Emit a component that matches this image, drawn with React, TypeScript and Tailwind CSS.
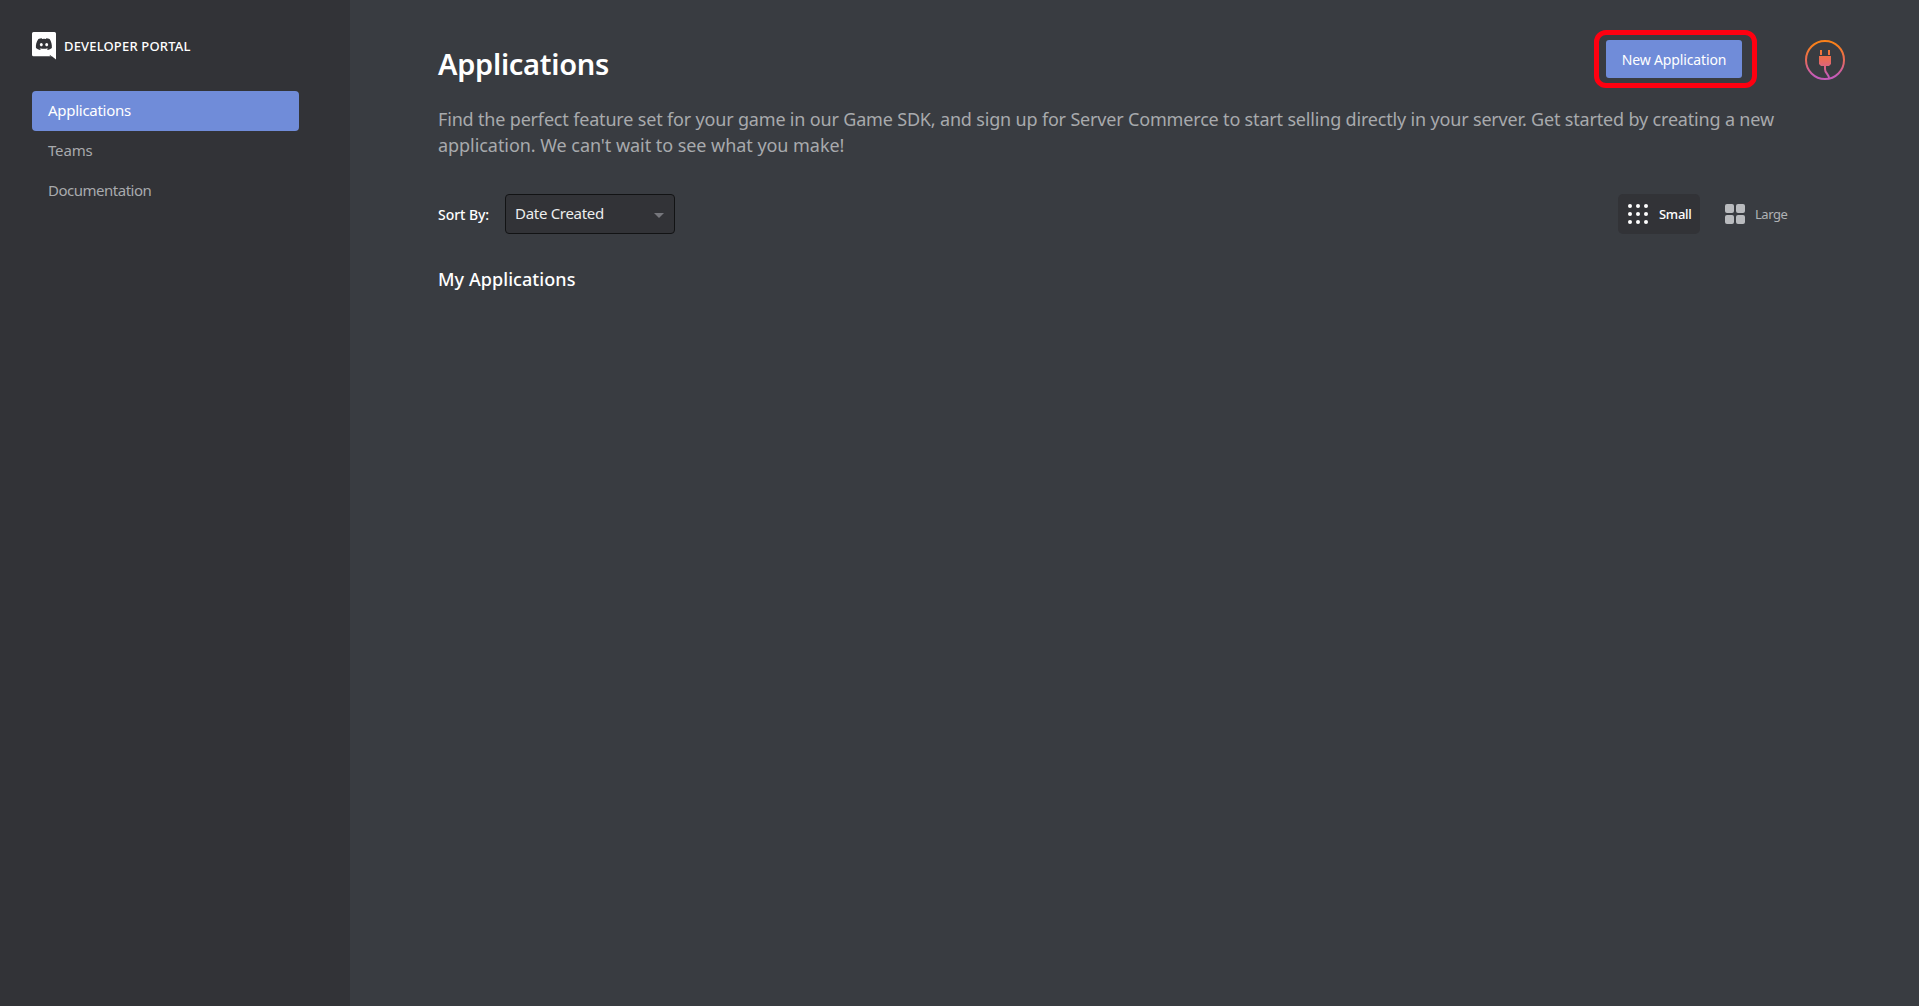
import React from "react";

const navItems = [
  { label: "Applications", style: "bg-[#708cd9] text-white tracking-[-0.28px]" },
  { label: "Teams", style: "text-[#a8aaad] tracking-[-0.18px]" },
  { label: "Documentation", style: "text-[#a8aaad] tracking-[-0.49px]" },
];

function DiscordMark() {
  return (
    <svg className="h-[27.5px] w-6 shrink-0" viewBox="35 20 175 200" preserveAspectRatio="none" fill="#fff">
      <path d="M46 20h153q11 0 11 11v189l-30-24H46q-11 0-11-11V31q0-11 11-11z" />
      <path fill="#323337" d="M164 186l14 11h-12z" />
      <g transform="translate(63.5 65) scale(4.92 4.78)">
        <path
          fill="#323337"
          d="M20.317 1.370A19.800 19.800 0 0 0 15.432 0c-.230.400-.500.900-.640 1.250a18.300 18.300 0 0 0-5.490 0A12.600 12.600 0 0 0 8.680 0 19.700 19.700 0 0 0 3.680 1.370C.530 6.050-.320 10.600.100 15.060a19.900 19.900 0 0 0 6 3.030c.460-.630.870-1.300 1.220-1.990a13 13 0 0 1-1.870-.900l.370-.290c3.930 1.790 8.180 1.790 12.060 0l.370.290c-.600.350-1.220.650-1.870.900.360.700.770 1.360 1.230 1.990a19.800 19.800 0 0 0 6-3.030c.500-5.180-.840-9.670-3.290-13.690zM8.020 12.330c-1.180 0-2.160-1.090-2.160-2.420s.960-2.420 2.160-2.420 2.180 1.090 2.160 2.420-.960 2.420-2.160 2.420zm7.970 0c-1.180 0-2.160-1.090-2.160-2.420s.960-2.420 2.160-2.420 2.180 1.090 2.160 2.420-.950 2.420-2.160 2.420z"
        />
      </g>
    </svg>
  );
}

function PlugAvatar() {
  return (
    <svg className="ml-[63px] size-10 shrink-0" viewBox="0 0 40 40">
      <defs>
        <linearGradient id="plug" gradientUnits="userSpaceOnUse" x1="0" y1="0" x2="0" y2="40">
          <stop offset="0.1" stopColor="#fa8019" />
          <stop offset="0.5" stopColor="#e96a58" />
          <stop offset="0.9" stopColor="#c45bb8" />
        </linearGradient>
      </defs>
      <circle cx="20" cy="20" r="19" fill="none" stroke="url(#plug)" strokeWidth="2" />
      <path fill="url(#plug)" d="M15 10h2v5h-2zM23 10h2v5h-2zM14 16h12v8l-2 2h-8l-2-2z" />
      <path fill="none" stroke="url(#plug)" strokeWidth="2" d="M20 25v4c0 5 4 4 4 10" />
    </svg>
  );
}

function DotGrid() {
  const steps = [2, 10, 18];
  return (
    <svg className="size-5" viewBox="0 0 20 20" fill="#fff">
      {steps.map((y) => steps.map((x) => <circle key={`${x}-${y}`} cx={x} cy={y} r="2" />))}
    </svg>
  );
}

function SquareGrid() {
  const steps = [0, 11];
  return (
    <svg className="size-5" viewBox="0 0 20 20" fill="#b9bbbe">
      {steps.map((y) => steps.map((x) => <rect key={`${x}-${y}`} x={x} y={y} width="9" height="9" rx="2" />))}
    </svg>
  );
}

export default function App() {
  return (
    <div className="flex h-screen overflow-hidden bg-[#393c41] font-['Noto_Sans',sans-serif] text-white">
      <aside className="w-[350px] shrink-0 bg-[#323337] pl-8">
        <div className="flex items-start pt-8">
          <DiscordMark />
          <span className="ml-2 mt-1 text-[13px] font-medium leading-5 tracking-[0.17px]">DEVELOPER PORTAL</span>
        </div>
        <nav className="mt-[31.5px] w-[267px]">
          {navItems.map((item) => (
            <a key={item.label} className={`block h-10 rounded pl-4 text-[15px] leading-[38px] ${item.style}`}>
              {item.label}
            </a>
          ))}
        </nav>
      </aside>

      <main className="flex-1 pl-[88px] pt-10">
        <header className="flex items-start">
          <div className="flex w-[1304px] items-start justify-between">
            <h1 className="mt-1 text-[29px] font-semibold leading-10 tracking-[-0.28px]">Applications</h1>
            <div className="relative">
              <button className="block h-[38px] w-[136px] rounded-[3px] bg-[#708cd9] text-[14px] leading-10 tracking-[-0.14px]">
                New Application
              </button>
              <div className="absolute -left-3 -top-2.5 h-[58px] w-[163px] rounded-xl border-[5px] border-[#ff0010]" />
            </div>
          </div>
          <PlugAvatar />
        </header>

        <p className="mt-[22px] whitespace-nowrap text-[18px] leading-[26px] text-[#a8aaad]">
          <span className="tracking-[-0.175px]">
            Find the perfect feature set for your game in our Game SDK, and sign up for Server Commerce to start selling
            directly in your server. Get started by creating a new
          </span>
          <br />
          <span className="tracking-[-0.05px]">application. We can't wait to see what you make!</span>
        </p>

        <div className="mt-9 flex w-[1359px] items-center">
          <span className="w-[67px] text-[14px] font-medium tracking-[-0.06px]">Sort By:</span>
          <div className="flex h-10 w-[170px] items-center justify-between rounded border border-[#121314] bg-[#323337] pl-[9px] pr-2.5">
            <span className="-mt-0.5 text-[15px] tracking-[-0.3px] text-[#eceded]">Date Created</span>
            <svg className="mt-0.5 h-[5px] w-2.5" viewBox="0 0 10 5" fill="#76777c">
              <path d="M0 0h10L5 5z" />
            </svg>
          </div>
          <div className="ml-auto flex gap-[15px]">
            <div className="flex h-10 w-[82px] items-center rounded-[5px] bg-[#323337] pl-2.5">
              <DotGrid />
              <span className="ml-[11px] mt-px text-[13px] font-medium tracking-[-0.28px]">Small</span>
            </div>
            <div className="flex h-10 w-[82px] items-center pl-2.5">
              <SquareGrid />
              <span className="ml-2.5 mt-px text-[13px] tracking-[-0.45px] text-[#b0b2b5]">Large</span>
            </div>
          </div>
        </div>

        <h2 className="mt-8 text-[18px] font-medium leading-[26px] tracking-[0.07px]">My Applications</h2>
      </main>
    </div>
  );
}
